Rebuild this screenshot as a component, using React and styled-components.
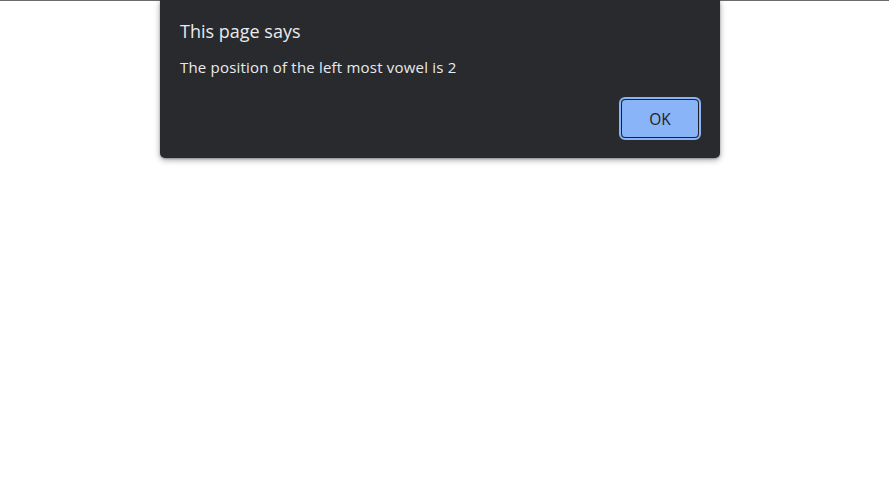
import styled, { createGlobalStyle } from "styled-components";

const GlobalStyle = createGlobalStyle`
  html, body {
    margin: 0;
    padding: 0;
    background: #ffffff;
  }
  body {
    font-family: "Open Sans", "Noto Sans", sans-serif;
  }
`;

const Page = styled.div`
  width: 889px;
  height: 482px;
  border-top: 1px solid #6b6b6b;
  box-sizing: border-box;
  display: flex;
  padding-left: 160px;
`;

const Dialog = styled.div`
  width: 560px;
  height: 158px;
  margin-top: -1px;
  box-sizing: border-box;
  background: #292a2d;
  border-radius: 0 0 5px 5px;
  box-shadow: 0 2px 6px rgba(0, 0, 0, 0.35), 0 1px 2px rgba(0, 0, 0, 0.25);
  padding: 19px 21px 20px 20px;
  display: flex;
  flex-direction: column;
  color: #e8eaed;
`;

const Title = styled.div`
  font-size: 18px;
  line-height: 24px;
  color: #e8eaed;
`;

const Message = styled.div`
  margin-top: 14px;
  font-size: 15px;
  line-height: 20px;
  letter-spacing: 0.2px;
  color: #e8eaed;
`;

const Footer = styled.div`
  margin-top: auto;
  display: flex;
  justify-content: flex-end;
`;

const Button = styled.button`
  width: 78px;
  height: 39px;
  box-sizing: border-box;
  border: 1px solid #202124;
  border-radius: 4px;
  outline: 2px solid #8ab4f8;
  outline-offset: 0;
  background: #8ab4f8;
  color: #202124;
  font-family: "Open Sans", "Noto Sans", sans-serif;
  font-size: 15.5px;
  padding: 0;
`;

export default function App() {
  return (
    <>
      <GlobalStyle />
      <Page>
        <Dialog>
          <Title>This page says</Title>
          <Message>The position of the left most vowel is 2</Message>
          <Footer>
            <Button>OK</Button>
          </Footer>
        </Dialog>
      </Page>
    </>
  );
}
